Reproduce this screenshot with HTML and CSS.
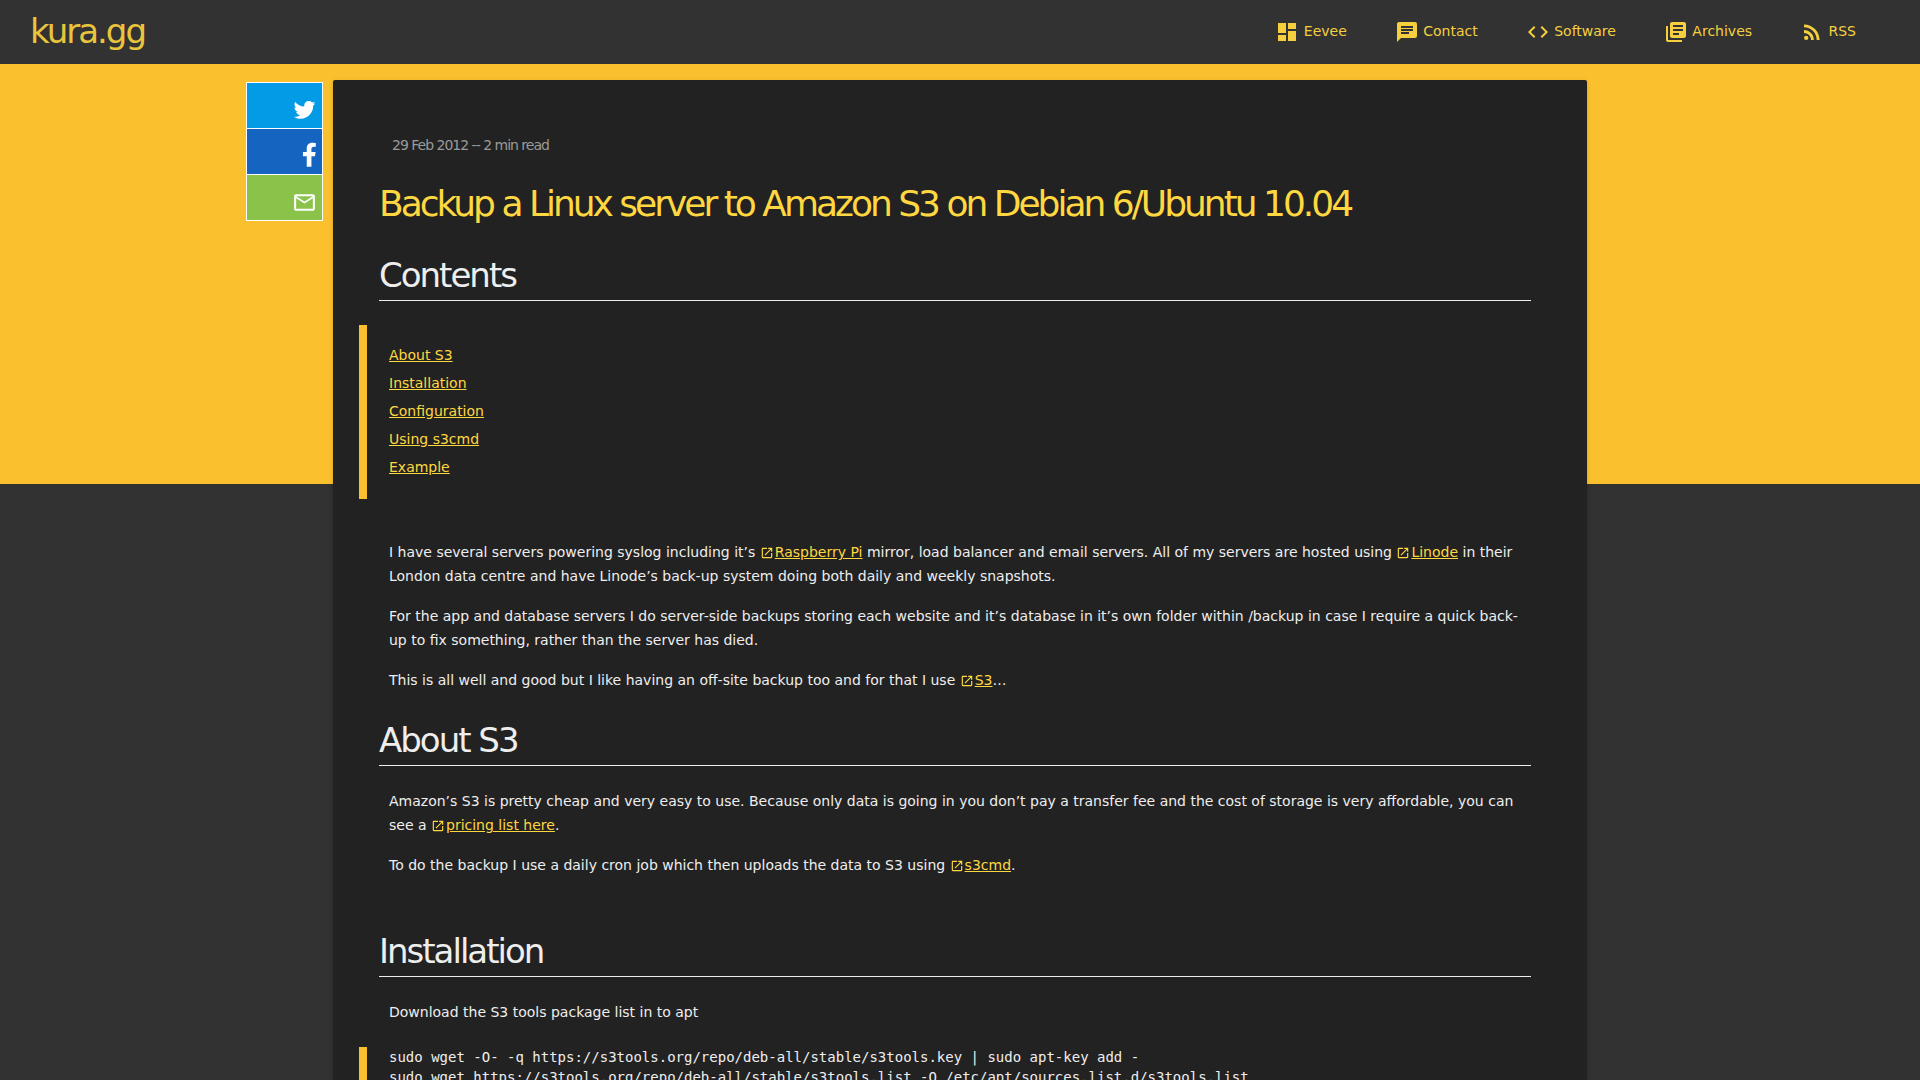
FILE: index.html
```html
<!DOCTYPE html>
<html lang="en">
<head>
<meta charset="utf-8">
<meta name="viewport" content="width=device-width, initial-scale=1">
<title>Backup a Linux server to Amazon S3 on Debian 6/Ubuntu 10.04</title>
<link rel="stylesheet" href="styles.css">
</head>
<body>
<svg class="sprite" aria-hidden="true">
  <symbol id="open-in-new" viewBox="0 0 24 24"><path d="M19 19H5V5h7V3H5c-1.110 0-2 .9-2 2v14c0 1.100.89 2 2 2h14c1.100 0 2-.9 2-2v-7h-2v7zM14 3v2h3.590l-9.830 9.830 1.410 1.410L19 6.410V10h2V3h-7z"/></symbol>
</svg>

<header class="header">
  <a class="logo" href="#">kura.gg</a>
  <nav class="nav">
    <a class="nav-link" href="#"><svg class="icon" viewBox="0 0 24 24"><path d="M3 13h8V3H3v10zm0 8h8v-6H3v6zm10 0h8V11h-8v10zm0-18v6h8V3h-8z"/></svg> Eevee</a>
    <a class="nav-link" href="#"><svg class="icon" viewBox="0 0 24 24"><path d="M20 2H4c-1.100 0-1.990.9-1.990 2L2 22l4-4h14c1.100 0 2-.9 2-2V4c0-1.100-.9-2-2-2zM6 9h12v2H6V9zm8 5H6v-2h8v2zm4-6H6V6h12v2z"/></svg> Contact</a>
    <a class="nav-link" href="#"><svg class="icon" viewBox="0 0 24 24"><path d="M9.400 16.600L4.800 12l4.600-4.600L8 6l-6 6 6 6 1.400-1.400zm5.200 0l4.600-4.600-4.600-4.600L16 6l6 6-6 6-1.400-1.400z"/></svg> Software</a>
    <a class="nav-link" href="#"><svg class="icon" viewBox="0 0 24 24"><path d="M4 6H2v14c0 1.100.9 2 2 2h14v-2H4V6zm16-4H8c-1.100 0-2 .9-2 2v12c0 1.100.9 2 2 2h12c1.100 0 2-.9 2-2V4c0-1.100-.9-2-2-2zm-1 9H9V9h10v2zm-4 4H9v-2h6v2zm4-8H9V5h10v2z"/></svg> Archives</a>
    <a class="nav-link" href="#"><svg class="icon" viewBox="0 0 24 24"><circle cx="6.180" cy="17.820" r="2.180"/><path d="M4 4.440v2.830c7.030 0 12.730 5.700 12.730 12.730h2.830c0-8.590-6.970-15.560-15.560-15.560zm0 5.660v2.830c3.900 0 7.070 3.170 7.070 7.070h2.830c0-5.470-4.430-9.900-9.900-9.900z"/></svg> RSS</a>
  </nav>
</header>

<main class="page">
  <aside class="share">
    <a class="share-link twitter" href="#" aria-label="Share on Twitter"><svg class="share-icon" viewBox="0 1 24 24"><path d="M22.460 6c-.77.35-1.600.58-2.460.69.88-.53 1.560-1.370 1.880-2.380-.83.5-1.750.85-2.720 1.050C18.370 4.500 17.260 4 16 4c-2.350 0-4.270 1.920-4.270 4.290 0 .34.04.67.11.98C8.280 9.090 5.110 7.380 3 4.790c-.37.63-.58 1.370-.58 2.150 0 1.490.75 2.810 1.910 3.560-.71 0-1.370-.2-1.950-.5v.03c0 2.080 1.480 3.820 3.440 4.210a4.220 4.220 0 0 1-1.930.07 4.280 4.280 0 0 0 4 2.980 8.521 8.521 0 0 1-5.330 1.840c-.34 0-.68-.02-1.020-.06C3.440 20.290 5.700 21 8.120 21 16 21 20.330 14.460 20.330 8.790c0-.19 0-.37-.01-.56.84-.6 1.560-1.360 2.140-2.230z"/></svg></a>
    <a class="share-link facebook" href="#" aria-label="Share on Facebook"><svg class="share-icon" viewBox="-210 26 533 533"><path d="M279.140 288l14.220-92.660h-88.910v-60.130c0-25.350 12.420-50.060 52.240-50.060h40.420V6.260S260.430 0 225.360 0c-73.220 0-121.080 44.380-121.080 124.720v70.620H22.890V288h81.390v224h100.170V288z"/></svg></a>
    <a class="share-link email" href="#" aria-label="Share by email"><svg class="share-icon" viewBox="0 0 24 24"><path d="M20 4H4c-1.100 0-2 .9-2 2v12c0 1.100.9 2 2 2h16c1.100 0 2-.9 2-2V6c0-1.100-.9-2-2-2zm0 14H4V8l8 5 8-5v10zm-8-7L4 6h16l-8 5z"/></svg></a>
  </aside>

  <article class="card">
    <p class="meta">29 Feb 2012 -- 2 min read</p>
    <h1 class="title">Backup a Linux server to Amazon S3 on Debian 6/Ubuntu 10.04</h1>

    <h2 class="heading">Contents</h2>
    <ul class="toc">
      <li><a href="#about-s3">About S3</a></li>
      <li><a href="#installation">Installation</a></li>
      <li><a href="#configuration">Configuration</a></li>
      <li><a href="#using-s3cmd">Using s3cmd</a></li>
      <li><a href="#example">Example</a></li>
    </ul>

    <p class="text">I have several servers powering syslog including it’s <a href="#"><svg class="external"><use href="#open-in-new"/></svg>Raspberry Pi</a> mirror, load balancer and email servers. All of my servers are hosted using <a href="#"><svg class="external"><use href="#open-in-new"/></svg>Linode</a> in their London data centre and have Linode’s back-up system doing both daily and weekly snapshots.</p>
    <p class="text">For the app and database servers I do server-side backups storing each website and it’s database in it’s own folder within /backup in case I require a quick back-up to fix something, rather than the server has died.</p>
    <p class="text">This is all well and good but I like having an off-site backup too and for that I use <a href="#"><svg class="external"><use href="#open-in-new"/></svg>S3</a>…</p>

    <section class="section" id="about-s3">
      <h2 class="heading">About S3</h2>
      <p class="text">Amazon’s S3 is pretty cheap and very easy to use. Because only data is going in you don’t pay a transfer fee and the cost of storage is very affordable, you can see a <a href="#"><svg class="external"><use href="#open-in-new"/></svg>pricing list here</a>.</p>
      <p class="text">To do the backup I use a daily cron job which then uploads the data to S3 using <a href="#"><svg class="external"><use href="#open-in-new"/></svg>s3cmd</a>.</p>
    </section>

    <section class="section" id="installation">
      <h2 class="heading">Installation</h2>
      <p class="text">Download the S3 tools package list in to apt</p>
      <pre class="code">sudo wget -O- -q https://s3tools.org/repo/deb-all/stable/s3tools.key | sudo apt-key add -
sudo wget https://s3tools.org/repo/deb-all/stable/s3tools.list -O /etc/apt/sources.list.d/s3tools.list</pre>
    </section>
  </article>
</main>
</body>
</html>
```
FILE: styles.css
```css
* {
  box-sizing: border-box;
}

body {
  display: flex;
  flex-direction: column;
  height: 100vh;
  margin: 0;
  background: #323232;
  color: #eeeeee;
  font: 14px/24px "DejaVu Sans", sans-serif;
}

a {
  color: #ffd740;
}

.sprite {
  display: none;
}

.header {
  display: flex;
  flex: none;
  align-items: center;
  justify-content: space-between;
  min-height: 64px;
  padding: 0 40px 2px 30px;
  background: #323232;
}

.logo {
  color: #e9c53d;
  font-size: 34px;
  line-height: 40px;
  letter-spacing: -2px;
  text-decoration: none;
}

.nav {
  display: flex;
}

.nav-link {
  padding: 0 24px;
  color: #f5cf3e;
  text-decoration: none;
  white-space: nowrap;
}

.icon {
  width: 24px;
  height: 24px;
  vertical-align: middle;
  fill: currentColor;
}

.page {
  display: grid;
  flex: 1;
  grid-template-columns: 1fr minmax(0, 1254px) 1fr;
  align-items: start;
  min-height: 0;
  padding-top: 16px;
  overflow-y: auto;
  scrollbar-width: none;
  background: linear-gradient(#fbc02d, #fbc02d) 0 0 / 100% 420px no-repeat local;
}

.share {
  display: grid;
  gap: 1px;
  justify-self: end;
  width: 77px;
  margin: 2px 10px 0 0;
  border: 1px solid #ffffff;
  background: #ffffff;
}

.share-link {
  display: flex;
  align-items: flex-end;
  justify-content: flex-end;
  height: 45px;
  padding: 5px;
}

.share-icon {
  width: 25px;
  height: 25px;
  overflow: visible;
  fill: #ffffff;
}

.twitter {
  background: #039be5;
}

.facebook {
  background: #1565c0;
}

.email {
  background: #8bc34a;
}

.card {
  padding: 53px 56px 40px 46px;
  border-radius: 2px;
  background: #222222;
  box-shadow: 0 2px 2px rgba(0, 0, 0, 0.14), 0 3px 1px -2px rgba(0, 0, 0, 0.2), 0 1px 5px rgba(0, 0, 0, 0.12);
}

.meta {
  margin: 0 0 24px;
  padding-left: 13px;
  color: #9a9a9a;
  letter-spacing: -1px;
}

.title {
  margin: 0;
  color: #ffd740;
  font-size: 36px;
  font-weight: 400;
  line-height: 46px;
  letter-spacing: -3px;
}

.heading {
  margin: 28px 0 23px;
  padding-bottom: 5px;
  border-bottom: 1px solid #eeeeee;
  font-size: 34px;
  font-weight: 400;
  line-height: 40px;
  letter-spacing: -2px;
}

.toc {
  margin: 24px 0 41px -20px;
  padding: 16px 22px 18px;
  border-left: 8px solid #fbc02d;
  line-height: 28px;
  list-style: none;
}

.text {
  margin: 0 0 16px;
  padding: 0 10px;
}

.external {
  width: 14px;
  height: 14px;
  margin-right: 1px;
  vertical-align: -3px;
  fill: currentColor;
}

.section {
  padding-bottom: 10px;
}

.code {
  margin: 23px 0 24px -20px;
  padding-left: 22px;
  border-left: 8px solid #fbc02d;
  font: 14px/20px "DejaVu Sans Mono", monospace;
}
```
